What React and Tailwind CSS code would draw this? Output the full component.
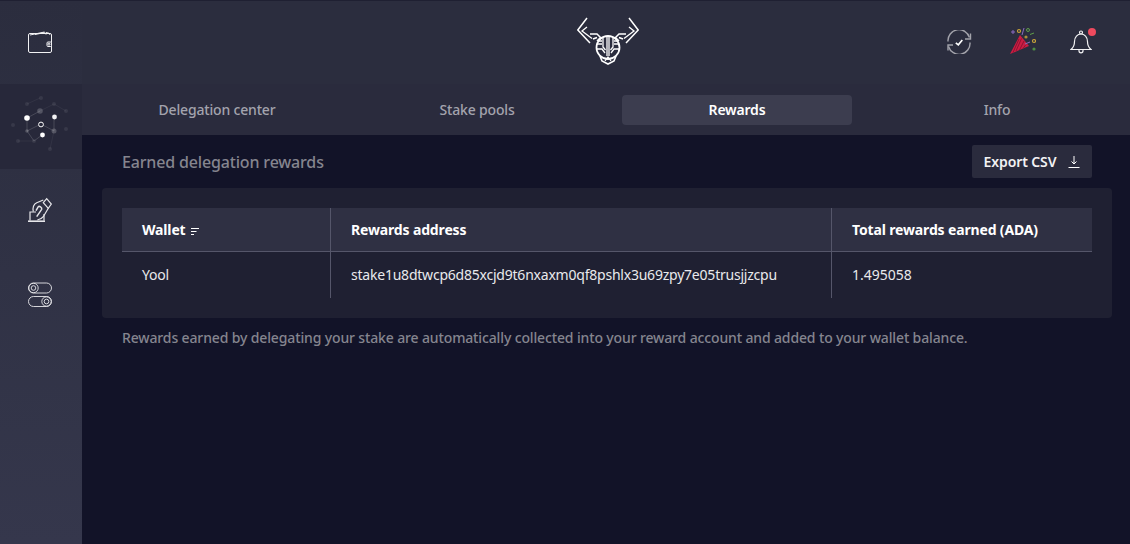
import React from "react";

const WalletIcon = () => (
  <svg width="26" height="24" viewBox="27 30 26 24" fill="none" stroke="#f2f2f4" strokeWidth="1">
    <path d="M28.500 35v16a1.500 1.500 0 0 0 1.500 1.500h20a1.500 1.500 0 0 0 1.500-1.500V35a1.500 1.500 0 0 0-1.500-1.500H30a1.500 1.500 0 0 0-1.500 1.500z" />
    <path d="M30 35 44.500 32l1.500 2.500M35 34.500l9-1.800M46 32.500l3 .7.500 1.500" />
    <rect x="47" y="42" width="4.500" height="4.500" rx="1" fill="#2c2e40" />
    <circle cx="49" cy="44.200" r="1" />
  </svg>
);

const StakeIcon = () => {
  const faint = [[41, 14], [27, 20], [54, 20], [66, 27], [13, 41], [66, 45], [18, 57], [34, 57], [50, 65]];
  const mid = [[40, 27, 2.8], [27, 47, 1.8], [54, 47, 2.500]];
  return (
    <svg width="82" height="85" viewBox="0 0 82 85">
      <path d="M27 20 40 14M54 20 66 27M18 57h16M54 47 50 65M40 27 54 20" stroke="#ffffff" strokeOpacity="0.05" fill="none" />
      <path d="M27 34 40 27M27 34V47L41 40 54 47V33M27 47 34 57 42 51" stroke="#ffffff" strokeOpacity="0.15" fill="none" />
      {faint.map(([x, y]) => (
        <circle key={`${x}-${y}`} cx={x} cy={y} r="2" fill="#ffffff" fillOpacity="0.08" />
      ))}
      {mid.map(([x, y, r]) => (
        <circle key={`${x}-${y}`} cx={x} cy={y} r={r} fill="#ffffff" fillOpacity="0.2" />
      ))}
      <circle cx="27" cy="34" r="2.800" fill="#fff" />
      <circle cx="54.500" cy="33" r="2.400" fill="#f2f2f4" />
      <circle cx="42.500" cy="51" r="2.400" fill="#fff" />
      <circle cx="41" cy="40.500" r="2.400" fill="#27283a" stroke="#fff" strokeWidth="1" />
    </svg>
  );
};

const VoteIcon = () => (
  <svg width="26" height="26" viewBox="27 197 26 26" fill="none" stroke="#e6e6ea" strokeWidth="1.200">
    <path d="M28 221.200h17" strokeWidth="1.600" />
    <path d="M30 220.500V212h6M44 214v6.500" />
    <path d="M33.300 211.700c-1-5 1.500-8 3.400-9l6.600-2.700" />
    <path d="M48.300 208.300 43.300 216.700c-1.500 2-3.500 3-6 3.300" />
    <path d="M43.300 202.700 46.700 198.700 51.300 204 48.300 208.300z" />
    <path d="M36.700 216.700 41.700 209.300c.5-2-2.500-3.500-3.400-2.600L36 210.700" strokeWidth="1.500" />
  </svg>
);

const ToggleIcon = () => (
  <svg width="24" height="26" viewBox="0 0 24 26" fill="none" stroke="#e6e6ea" strokeWidth="0.900">
    <rect x="0.500" y="1" width="23" height="10" rx="5" />
    <circle cx="5.500" cy="6" r="4.700" />
    <circle cx="5.500" cy="6" r="2.300" />
    <rect x="0.500" y="14.500" width="23" height="10" rx="5" />
    <circle cx="18.500" cy="19.500" r="4.700" />
    <circle cx="18.500" cy="19.500" r="2.300" />
  </svg>
);

const BullLogo = () => (
  <svg width="62" height="48" viewBox="0 0 62 48" fill="none" stroke="#ffffff" strokeWidth="1.300">
    <path d="M10 1 .8 13 13 26" strokeWidth="1.500" />
    <path d="M10 10 5 14l10 7.500" strokeWidth="1.300" />
    <path d="M52 1 61.200 13 49 26" strokeWidth="1.500" />
    <path d="M52 10 57 14l-10 7.500" strokeWidth="1.300" />
    <path d="M13 17h7l4 4M49 17h-7l-4 4M16 22l4-1.500M46 22l-4-1.500M20 24l3-3M42 24l-3-3" strokeWidth="1.500" />
    <circle cx="31" cy="30.500" r="11.500" strokeWidth="1.800" />
    <path d="M30 19v20M32 19v20M26 20v10l2.500 3M36 20v10l-2.500 3M20 27h5M42 27h-5M20 32h5l3 4M42 32h-5l-3 4M22 24h3M40 24h-3" strokeWidth="1.300" />
    <path d="M23 39l2 5 6 3 6-3 2-5" strokeWidth="1.600" />
    <path d="M28 44l3-4 3 4" strokeWidth="1.200" />
  </svg>
);

const SyncIcon = () => (
  <svg width="26" height="24" viewBox="946 30 26 24" fill="none" stroke="#a3a3ab" strokeWidth="1.400">
    <path d="M948 41.500a11 11 0 0 1 21.500-4" />
    <path d="M970.500 33.500v5.500H965" />
    <path d="M970 42.500a11 11 0 0 1-21.500 4" />
    <path d="M948 50.500V45h5" />
    <path d="M955.800 42.800l2.500 2 4-4.800" stroke="#ffffff" strokeWidth="1.700" />
  </svg>
);

const PartyIcon = () => (
  <svg width="28" height="30" viewBox="1008 26 28 30" fill="none">
    <path d="M1010 54 1020 35 1029 46z" fill="#cc1d42" />
    <path d="M1013 52.500 1019 39M1016 51 1021.500 38.500M1019.500 50 1024 41M1023 48.500 1026 44.500" stroke="#8f1233" strokeWidth="1" />
    <path d="M1024 28 1022 35M1030 42 1025 44" stroke="#8a6bc0" strokeWidth="1" />
    <path d="M1011 32h4M1013 30v4" stroke="#8a6bc0" strokeWidth="1" />
    <circle cx="1019" cy="31" r="1.500" stroke="#c9a43a" strokeWidth="1.200" />
    <circle cx="1028" cy="30" r="1.500" stroke="#5f9e4a" strokeWidth="1" />
    <circle cx="1026" cy="37" r="1.600" fill="#a98f3a" />
    <path d="M1030 34.500 1034 33" stroke="#5f9e4a" strokeWidth="1" />
    <circle cx="1034" cy="41" r="1.500" stroke="#c9a43a" strokeWidth="1.200" />
    <circle cx="1034" cy="49" r="1.600" fill="#4f8f45" />
  </svg>
);

const BellIcon = () => (
  <svg width="22" height="24" viewBox="1070 30 22 24" fill="none" stroke="#f2f2f4" strokeWidth="1.200">
    <path d="M1071 49.500h20c-2.500-2-3.500-4-3.500-8 0-4.500-3-7.500-6.500-7.500s-6.500 3-6.500 7.500c0 4-1 6-3.500 8z" />
    <circle cx="1081" cy="32.500" r="1.500" />
    <path d="M1079 49.500v1.300a2 2 0 0 0 4 0v-1.300" />
  </svg>
);

const SortIcon = () => (
  <svg width="8" height="7" viewBox="0 0 8 7" fill="none" stroke="#ffffff" strokeWidth="1">
    <path d="M0 .500h8M0 3.500h5.500M0 6.500h3" />
  </svg>
);

const DownloadIcon = () => (
  <svg width="12" height="12" viewBox="0 0 12 12" fill="none" stroke="#ffffff" strokeWidth="1">
    <path d="M6 0v8M3.500 5.500 6 8l2.500-2.500M.5 11.500h11" />
  </svg>
);

const tabs = ["Delegation center", "Stake pools", "Rewards", "Info"];

export default function App() {
  return (
    <div className="flex h-[544px] w-[1130px] overflow-hidden bg-[#121328] font-['Noto_Sans',sans-serif] text-[14px]">
      <aside className="flex w-[82px] shrink-0 flex-col bg-gradient-to-b from-[#2b2d3e] to-[#35374c] shadow-[inset_0_1px_0_#1f2032]">
        <div className="flex h-[84px] items-center justify-center pr-[2px]">
          <WalletIcon />
        </div>
        <div className="h-[85px] bg-[#27283a]">
          <StakeIcon />
        </div>
        <div className="flex h-[84px] items-center justify-center pr-[2px] pb-[2px]">
          <VoteIcon />
        </div>
        <div className="flex h-[84px] items-center justify-center pr-[2px]">
          <ToggleIcon />
        </div>
      </aside>

      <main className="flex min-w-0 flex-1 flex-col">
        <header className="flex h-[84px] bg-[#2b2d3e] shadow-[inset_0_1px_0_#1f2032]">
          <div className="w-[495px]" />
          <div className="pt-[17px]">
            <BullLogo />
          </div>
          <div className="ml-[307px] flex gap-[36px] pt-[30px]">
            <SyncIcon />
            <div className="mt-[-4px]">
              <PartyIcon />
            </div>
            <div className="relative ml-[-2px]">
              <BellIcon />
              <span className="absolute left-[18px] top-[-2px] h-2 w-2 rounded-full bg-[#ee4a5e]" />
            </div>
          </div>
        </header>

        <nav className="grid h-[51px] grid-cols-4 bg-[#2a2b3d] pl-[5px] pr-[3px]">
          {tabs.map((tab) => (
            <div key={tab} className="flex items-center justify-center px-[15px]">
              <div
                className={
                  tab === "Rewards"
                    ? "flex h-[30px] w-full items-center justify-center rounded-[4px] bg-[#3c3d4f] font-semibold tracking-[-0.2px] text-white"
                    : "flex h-[30px] w-full items-center justify-center font-medium tracking-[-0.17px] text-[#a3a3ad]"
                }
              >
                {tab}
              </div>
            </div>
          ))}
        </nav>

        <section className="flex flex-1 flex-col pl-5 pr-[18px]">
          <div className="mt-[10px] flex h-[33px] items-center justify-between px-5">
            <h2 className="text-[16px] font-medium tracking-[-0.16px] text-[#85858f]">Earned delegation rewards</h2>
            <button className="flex h-[33px] w-[120px] items-center justify-center gap-[12px] rounded-[2px] bg-[#2a2b3d] font-semibold tracking-[-0.1px] text-[#f2f2f4]">
              Export CSV
              <DownloadIcon />
            </button>
          </div>

          <div className="mt-[10px] h-[130px] rounded-[4px] bg-[#1f2032] p-5">
            <div className="grid grid-cols-[209px_501px_260px] text-[#e9e9ec]">
              <div className="flex h-[44px] items-center gap-[5px] border-r border-b border-[#55566a] bg-[#2f3043] pl-5 font-bold tracking-[-0.15px] text-white">
                Wallet
                <span className="mt-[3px]">
                  <SortIcon />
                </span>
              </div>
              <div className="flex h-[44px] items-center border-r border-b border-[#55566a] bg-[#2f3043] pl-5 font-bold tracking-[-0.15px] text-white">
                Rewards address
              </div>
              <div className="flex h-[44px] items-center border-b border-[#55566a] bg-[#2f3043] pl-5 font-bold tracking-[-0.15px] text-white">
                Total rewards earned (ADA)
              </div>
              <div className="flex h-[46px] items-center border-r border-[#55566a] pb-[2px] pl-5 tracking-[-0.2px]">Yool</div>
              <div className="flex h-[46px] items-center border-r border-[#55566a] pb-[2px] pl-5 tracking-[-0.22px]">
                stake1u8dtwcp6d85xcjd9t6nxaxm0qf8pshlx3u69zpy7e05trusjjzcpu
              </div>
              <div className="flex h-[46px] items-center pb-[2px] pl-5">1.495058</div>
            </div>
          </div>

          <p className="mt-[9px] pl-5 font-medium tracking-[-0.136px] text-[#85858f]">
            Rewards earned by delegating your stake are automatically collected into your reward account and added to your wallet balance.
          </p>
        </section>
      </main>
    </div>
  );
}
